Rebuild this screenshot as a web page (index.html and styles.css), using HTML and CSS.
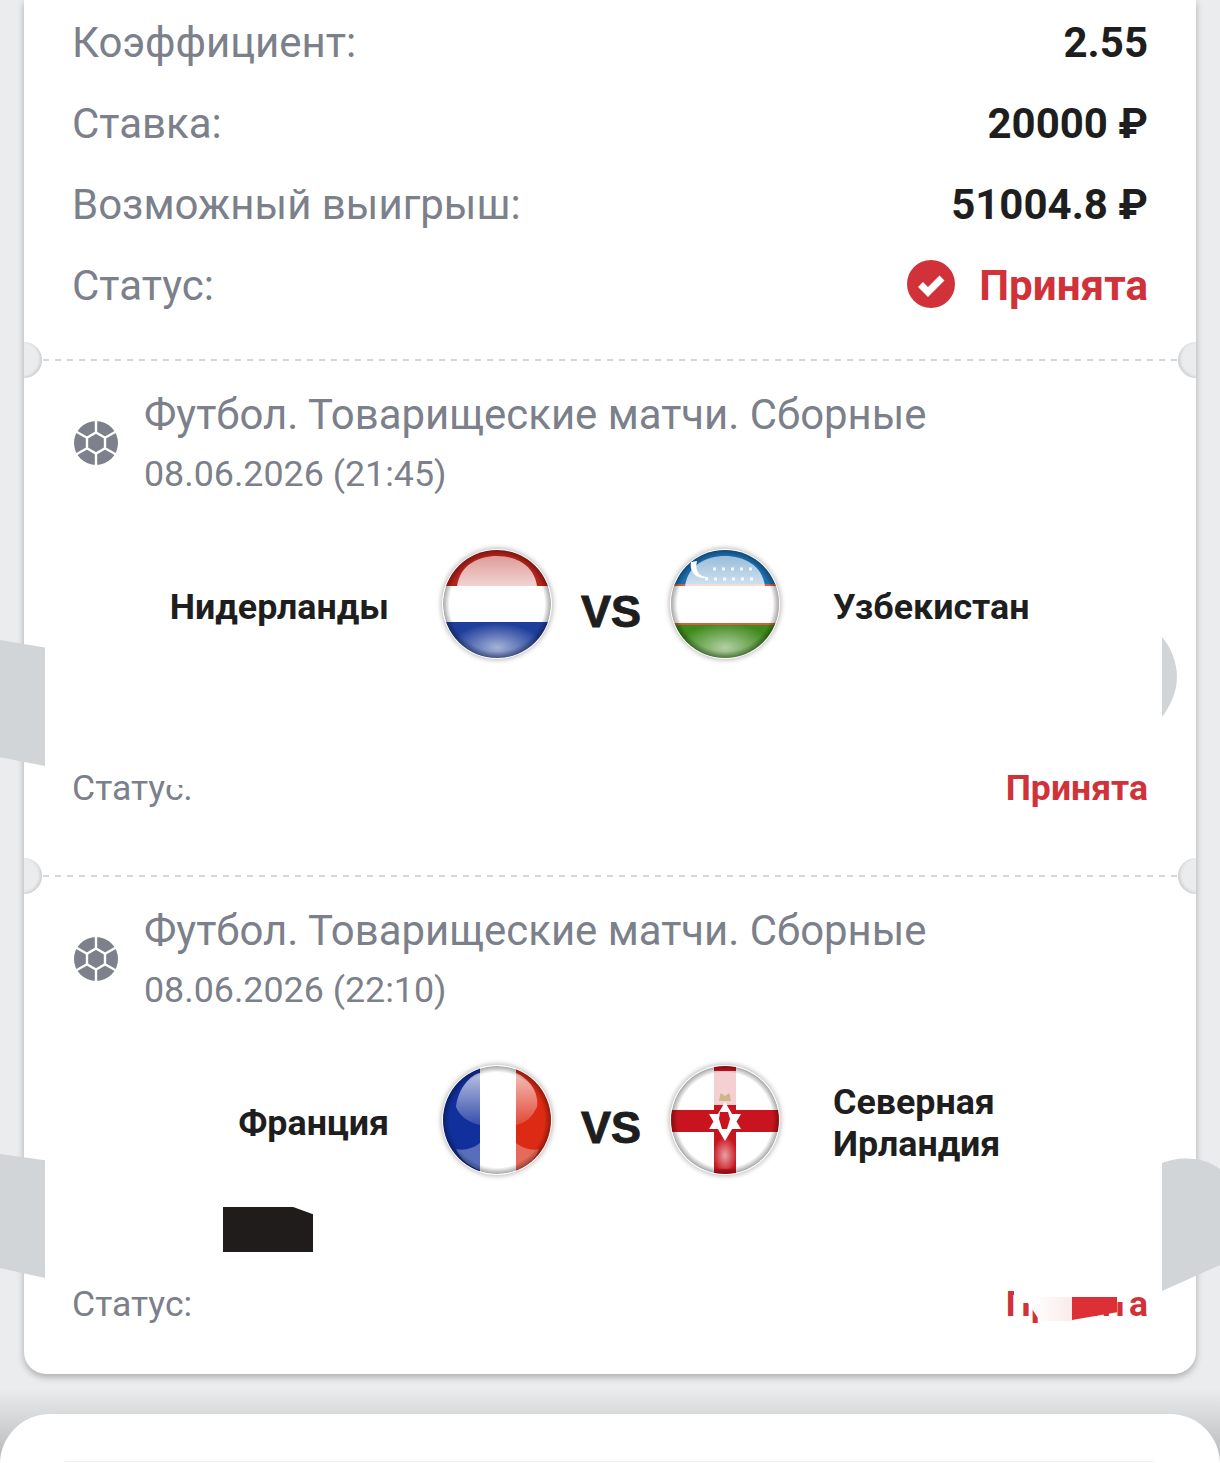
FILE: index.html
```html
<!DOCTYPE html>
<html lang="ru">
<head>
    <meta charset="UTF-8">
    <title>Купон</title>
    <link rel="stylesheet" href="styles.css">
</head>
<body>
    <svg class="defs" width="0" height="0">
        <defs>
            <clipPath id="flagClip"><circle cx="55" cy="55" r="54"/></clipPath>
            <linearGradient id="glossTop" x1="0" y1="0" x2="0" y2="1">
                <stop offset="0" stop-color="#fff" stop-opacity=".55"/>
                <stop offset="1" stop-color="#fff" stop-opacity=".8"/>
            </linearGradient>
            <linearGradient id="lobe" x1="0" y1="0" x2="0" y2="1">
                <stop offset="0" stop-color="#fff" stop-opacity=".7"/>
                <stop offset="1" stop-color="#fff" stop-opacity=".15"/>
            </linearGradient>
            <radialGradient id="glossBottom" cx=".5" cy=".6" r=".55">
                <stop offset="0" stop-color="#fff" stop-opacity=".6"/>
                <stop offset="1" stop-color="#fff" stop-opacity="0"/>
            </radialGradient>
            <radialGradient id="edgeShade" cx=".5" cy=".5" r=".5">
                <stop offset=".88" stop-color="#000" stop-opacity="0"/>
                <stop offset="1" stop-color="#000" stop-opacity=".35"/>
            </radialGradient>
            <g id="gloss">
                <path d="M15 37C18 16 36 7 55 7S92 16 95 37Z" fill="url(#glossTop)"/>
                <ellipse cx="55" cy="94" rx="42" ry="22" fill="url(#glossBottom)"/>
                <circle cx="55" cy="55" r="54" fill="url(#edgeShade)"/>
            </g>
            <g id="ballIcon">
                <circle cx="22" cy="22" r="22" fill="#7c818c"/>
                <path d="M22 11.5 31 16.8V27.2L22 32.5 13 27.2V16.8Z M22 0V11.5 M31 16.8 42 10.5 M31 27.2 42 33.5 M22 32.5V44 M13 27.2 2 33.5 M13 16.8 2 10.5" fill="none" stroke="#fff" stroke-width="2.4"/>
            </g>
        </defs>
    </svg>

    <main class="card">
        <section class="summary">
            <div class="row"><span class="row-label">Коэффициент:</span><span class="row-value">2.55</span></div>
            <div class="row"><span class="row-label">Ставка:</span><span class="row-value">20000 ₽</span></div>
            <div class="row"><span class="row-label">Возможный выигрыш:</span><span class="row-value">51004.8 ₽</span></div>
            <div class="row">
                <span class="row-label">Статус:</span>
                <span class="status-main">
                    <svg class="check" width="48" height="48" viewBox="0 0 48 48">
                        <circle cx="24" cy="24" r="24" fill="#d1323a"/>
                        <path d="M13.5 24.5 21 32 35 18" fill="none" stroke="#fff" stroke-width="7"/>
                    </svg>
                    Принята
                </span>
            </div>
        </section>

        <div class="divider"></div>

        <section class="event">
            <div class="event-head">
                <svg class="ball" width="44" height="44" viewBox="0 0 44 44"><use href="#ballIcon"/></svg>
                <div>
                    <div class="event-title">Футбол. Товарищеские матчи. Сборные</div>
                    <div class="event-date">08.06.2026 (21:45)</div>
                </div>
            </div>
            <div class="teams">
                <div class="team team-left">Нидерланды</div>
                <svg class="flag" width="110" height="110" viewBox="0 0 110 110">
                    <g clip-path="url(#flagClip)">
                        <rect width="110" height="37" fill="#b8241c"/>
                        <rect y="37" width="110" height="36" fill="#fff"/>
                        <rect y="73" width="110" height="37" fill="#1f3f9c"/>
                        <use href="#gloss"/>
                    </g>
                </svg>
                <div class="vs">VS</div>
                <svg class="flag" width="110" height="110" viewBox="0 0 110 110">
                    <g clip-path="url(#flagClip)">
                        <rect width="110" height="37" fill="#1d6fb0"/>
                        <rect y="35" width="110" height="41" fill="#d2603f"/>
                        <rect y="37" width="110" height="37" fill="#fff"/>
                        <rect y="76" width="110" height="34" fill="#3f8a1c"/>
                        <use href="#gloss"/>
                        <path d="M21 13C19 22 26 32 39 28 31 29 24 23 27 12Z" fill="#fff"/>
                        <path d="M43 20H83M35 30H83" stroke="#fff" stroke-width="3" stroke-dasharray="3 6" fill="none" opacity=".85"/>
                    </g>
                </svg>
                <div class="team">Узбекистан</div>
            </div>
            <div class="row row-small">
                <span class="row-label">Статус:</span>
                <span class="status-small">Принята</span>
            </div>
        </section>

        <div class="divider"></div>

        <section class="event event-last">
            <div class="event-head">
                <svg class="ball" width="44" height="44" viewBox="0 0 44 44"><use href="#ballIcon"/></svg>
                <div>
                    <div class="event-title">Футбол. Товарищеские матчи. Сборные</div>
                    <div class="event-date">08.06.2026 (22:10)</div>
                </div>
            </div>
            <div class="teams">
                <div class="team team-left">Франция</div>
                <svg class="flag" width="110" height="110" viewBox="0 0 110 110">
                    <g clip-path="url(#flagClip)">
                        <rect width="38" height="110" fill="#12309c"/>
                        <rect x="38" width="36" height="110" fill="#fff"/>
                        <rect x="74" width="36" height="110" fill="#dc2a14"/>
                        <path d="M14 42C16 22 30 9 38 8V60C28 58 18 52 14 42Z" fill="url(#lobe)"/>
                        <path d="M74 8C88 14 97 28 95 42 90 52 84 58 74 60Z" fill="url(#lobe)"/>
                        <path d="M38 78V105C28 102 18 94 14 84 22 86 30 84 38 78Z" fill="#fff" opacity=".3"/>
                        <path d="M74 78V105C84 102 94 94 97 84 90 86 82 84 74 78Z" fill="#fff" opacity=".3"/>
                        <circle cx="55" cy="55" r="54" fill="url(#edgeShade)"/>
                    </g>
                </svg>
                <div class="vs">VS</div>
                <svg class="flag" width="110" height="110" viewBox="0 0 110 110">
                    <g clip-path="url(#flagClip)">
                        <rect width="110" height="110" fill="#fff"/>
                        <rect x="44" width="22" height="110" fill="#c8141e"/>
                        <rect y="45" width="110" height="22" fill="#c8141e"/>
                        <rect x="44" y="6" width="22" height="34" fill="#fff" opacity=".8"/>
                        <rect x="44" y="70" width="22" height="34" fill="url(#glossBottom)"/>
                        <path d="M55 37 71 64H39Z M55 76 39 49H71Z" fill="#fff"/>
                        <path d="M50 47h8l2 7-3 10h-5l-3-10Z" fill="#c8141e"/>
                        <path d="M49 36 50.500 28 55 31 59.500 28 61 36Z" fill="#cdb68c"/>
                        <circle cx="55" cy="55" r="54" fill="url(#edgeShade)"/>
                    </g>
                </svg>
                <div class="team">Северная<br>Ирландия</div>
            </div>
            <div class="row row-small">
                <span class="row-label">Статус:</span>
                <span class="status-small">Принята</span>
            </div>
        </section>
    </main>

    <div class="sheet"><div class="sheet-line"></div></div>

    <!-- пятна поверх скриншота -->
    <div class="patch patch-left-1"></div>
    <div class="patch patch-left-2"></div>
    <div class="patch patch-right-1"></div>
    <div class="patch patch-right-2"></div>
    <div class="erase-colon"></div>
    <div class="black-mark"></div>
    <div class="erase-status"></div>
    <div class="red-mark"></div>
    <div class="erase-tail"></div>
</body>
</html>
```

FILE: styles.css
```css
* {
    margin: 0;
    padding: 0;
    box-sizing: border-box;
}

body {
    position: relative;
    width: 1220px;
    height: 1463px;
    overflow: hidden;
    font-family: Roboto, "Liberation Sans", sans-serif;
    color: #1e1e1e;
    background: linear-gradient(to bottom, #eaecee 1388px, #d8dadc 1414px, #b4b6b8 1463px);
}

.defs {
    position: absolute;
}

.card {
    margin: 0 24px;
    height: 1374px;
    background: #fff;
    border-radius: 0 0 22px 22px;
    box-shadow: 0 3px 7px rgba(0,0,0,0.28);
}

.summary {
    padding: 2px 48px 33px;
}

.row {
    display: flex;
    justify-content: space-between;
    align-items: center;
    height: 81px;
    font-size: 42px;
}

.row-label {
    color: #7b808a;
}

.row-value {
    font-weight: 700;
}

.status-main {
    display: flex;
    align-items: center;
    gap: 24px;
    font-size: 42.2px;
    font-weight: 700;
    color: #d1323a;
}

.check {
    margin-top: -4px;
}

.divider {
    position: relative;
    height: 2px;
    margin: 0 19px;
    background: repeating-linear-gradient(to right, #d5d7d9 0, #d5d7d9 6px, transparent 6px, transparent 12px);
}

.divider::before,
.divider::after {
    content: "";
    position: absolute;
    top: -17px;
    width: 36px;
    height: 36px;
    border-radius: 50%;
    background: #eaecee;
}

.divider::before {
    left: -37px;
    clip-path: inset(0 0 0 18px);
    box-shadow: inset -2px -1px 3px rgba(0,0,0,0.12);
}

.divider::after {
    right: -37px;
    clip-path: inset(0 18px 0 0);
    box-shadow: inset 2px -1px 3px rgba(0,0,0,0.12);
}

.event {
    height: 514px;
    padding: 25px 48px 0;
}

.event-last {
    height: auto;
}

.event-head {
    display: flex;
    align-items: center;
    gap: 26px;
}

.ball {
    flex: none;
    margin-left: 2px;
    margin-bottom: 4px;
}

.event-title {
    font-size: 41.9px;
    line-height: 58px;
    color: #7b808a;
}

.event-date {
    margin-top: 1px;
    font-size: 35.8px;
    line-height: 58px;
    color: #7b808a;
}

.teams {
    display: grid;
    grid-template-columns: 370px 110px 118px 110px 1fr;
    align-items: center;
    height: 112px;
    margin-top: 48px;
}

.team {
    padding-left: 53px;
    font-size: 35.8px;
    line-height: 42px;
    font-weight: 700;
}

.team-left {
    padding-left: 0;
    padding-right: 53px;
    text-align: right;
}

.flag {
    margin-top: -6px;
    border-radius: 50%;
    box-shadow: 0 0 5px 1px rgba(0,0,0,0.28);
    filter: blur(0.6px);
}

.vs {
    padding-top: 10px;
    font-family: "Liberation Sans", Arial, sans-serif;
    font-size: 45px;
    font-weight: 700;
    text-align: center;
    -webkit-text-stroke: 1px #1e1e1e;
}

.row-small {
    margin-top: 84px;
    font-size: 35.6px;
}

.status-small {
    font-weight: 700;
    color: #d1323a;
}

.sheet {
    height: 60px;
    margin-top: 40px;
    padding-top: 47px;
    background: #fff;
    border-radius: 50px 50px 0 0;
}

.sheet-line {
    height: 1px;
    margin: 0 65px;
    background: #f0f1f2;
}

/* пятна */
.patch {
    position: absolute;
    background: #d2d5d7;
}

.patch-left-1 {
    left: 0;
    top: 640px;
    width: 45px;
    height: 126px;
    clip-path: polygon(0 0, 100% 6%, 100% 100%, 0 93%);
}

.patch-left-2 {
    left: 0;
    top: 1154px;
    width: 45px;
    height: 124px;
    clip-path: polygon(0 0, 100% 5%, 100% 100%, 0 92%);
}

.patch-right-1 {
    left: 1162px;
    top: 637px;
    width: 15px;
    height: 80px;
    clip-path: path("M0 0C9 10 15 26 15 40C15 54 9 68 0 80Z");
}

.patch-right-2 {
    left: 1162px;
    top: 1157px;
    width: 58px;
    height: 135px;
    clip-path: path("M0 6C14 0 40 -2 58 12V108L0 134Z");
}

.erase-colon {
    position: absolute;
    left: 165px;
    top: 771px;
    width: 28px;
    height: 14px;
    background: #fff;
}

.black-mark {
    position: absolute;
    left: 223px;
    top: 1207px;
    width: 90px;
    height: 45px;
    background: #1f1c1b;
    clip-path: polygon(0 0, 78% 0, 100% 16%, 100% 100%, 0 100%);
}

.erase-status {
    position: absolute;
    left: 1014px;
    top: 1284px;
    width: 60px;
    height: 37px;
    background:
        linear-gradient(to bottom, #fff 13px, transparent 13px),
        linear-gradient(to right, #fff 30%, #fbe9e9 100%);
    clip-path: polygon(0 0, 100% 0, 100% 100%, 26px 100%, 14px 19px, 0 19px);
}

.red-mark {
    position: absolute;
    left: 1072px;
    top: 1297px;
    width: 45px;
    height: 23px;
    background: #dc2f36;
    clip-path: polygon(0 0, 100% 0, 100% 66%, 0 100%);
}

.erase-tail {
    position: absolute;
    left: 1117px;
    top: 1294px;
    width: 13px;
    height: 8px;
    background: #fff;
}
```
